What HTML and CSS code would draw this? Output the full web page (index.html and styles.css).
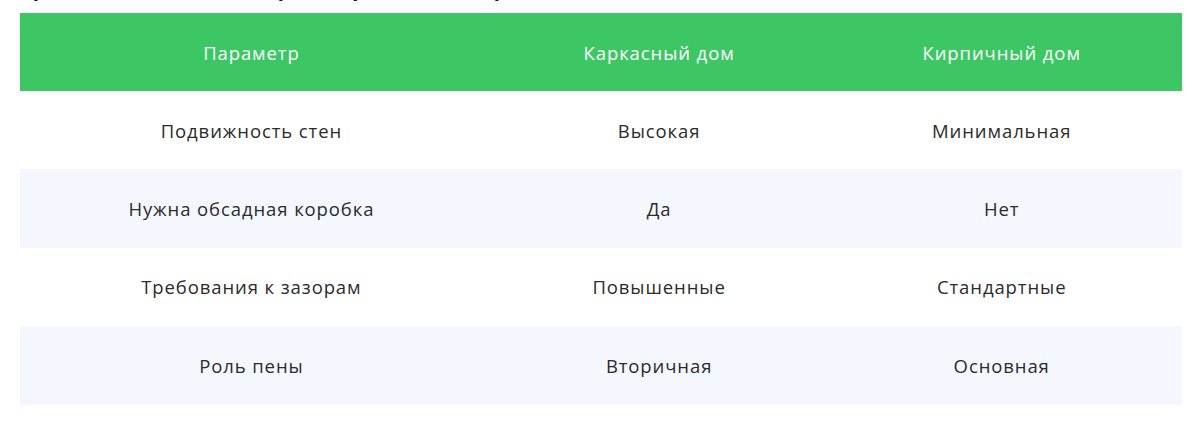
FILE: index.html
```html
<!DOCTYPE html>
<html lang="ru">
<head>
<meta charset="utf-8">
<link rel="stylesheet" href="styles.css">
</head>
<body>
<div class="page">
  <h2 class="title">Сравнение монтажа двери в каркасном и кирпичном доме — главные отличия</h2>
  <table class="cmp">
    <thead>
      <tr><th>Параметр</th><th>Каркасный дом</th><th>Кирпичный дом</th></tr>
    </thead>
    <tbody>
      <tr><td>Подвижность стен</td><td>Высокая</td><td>Минимальная</td></tr>
      <tr><td>Нужна обсадная коробка</td><td>Да</td><td>Нет</td></tr>
      <tr><td>Требования к зазорам</td><td>Повышенные</td><td>Стандартные</td></tr>
      <tr><td>Роль пены</td><td>Вторичная</td><td>Основная</td></tr>
    </tbody>
  </table>
</div>
</body>
</html>
```

FILE: styles.css
```css
html, body {
  margin: 0;
  padding: 0;
  background: #ffffff;
}
body {
  font-family: "Open Sans", "Noto Sans", sans-serif;
  color: #2b2b2b;
  overflow: hidden;
}
.page {
  padding: 0 18px 0 20px;
}
.title {
  margin: -23px 0 12px;
  font-size: 20px;
  line-height: 24px;
  font-weight: 700;
  color: #111;
  white-space: nowrap;
}
.cmp {
  width: 100%;
  border-collapse: collapse;
  font-size: 18.5px;
  letter-spacing: 0.9px;
}
.cmp th {
  background: #3cc764;
  color: #ffffff;
  font-weight: 500;
  height: 78px;
  padding: 0 10px;
  text-align: center;
}
.cmp td {
  height: 78.4px;
  padding: 0 10px;
  text-align: center;
}
.cmp tbody tr:nth-child(even) td {
  background: #f4f7fe;
}
.cmp th:nth-child(1), .cmp td:nth-child(1) { width: 40%; padding-right: 12px; }
.cmp th:nth-child(2), .cmp td:nth-child(2) { width: 30%; }
.cmp th:nth-child(3), .cmp td:nth-child(3) { width: 30%; padding-right: 22px; }
```
